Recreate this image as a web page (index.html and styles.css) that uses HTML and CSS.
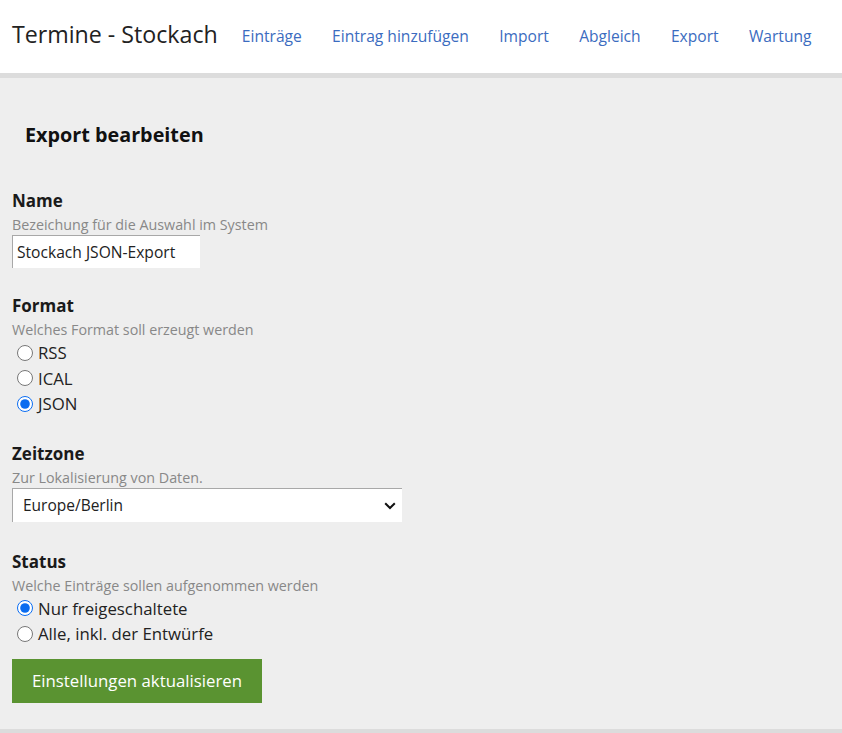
FILE: index.html
```html
<!DOCTYPE html>
<html lang="de">
<head>
<meta charset="utf-8">
<title>Termine - Stockach</title>
<link rel="stylesheet" href="styles.css">
</head>
<body>
<header class="topbar">
  <div class="brand">Termine - Stockach</div>
  <nav class="nav">
    <a href="#">Einträge</a>
    <a href="#">Eintrag hinzufügen</a>
    <a href="#">Import</a>
    <a href="#">Abgleich</a>
    <a href="#">Export</a>
    <a href="#">Wartung</a>
  </nav>
</header>
<main class="content">
  <h2 class="title">Export bearbeiten</h2>
  <form class="form">
    <div class="field">
      <div class="label">Name</div>
      <div class="help">Bezeichung für die Auswahl im System</div>
      <input class="text" type="text" value="Stockach JSON-Export">
    </div>
    <div class="field field-tight">
      <div class="label">Format</div>
      <div class="help">Welches Format soll erzeugt werden</div>
      <label class="radio"><input type="radio" name="f">RSS</label>
      <label class="radio"><input type="radio" name="f">ICAL</label>
      <label class="radio"><input type="radio" name="f" checked>JSON</label>
    </div>
    <div class="field field-loose">
      <div class="label">Zeitzone</div>
      <div class="help">Zur Lokalisierung von Daten.</div>
      <div class="select">
        <span>Europe/Berlin</span>
        <svg width="12" height="8" viewBox="0 0 12 8"><path d="M1.2 1.2 L6 6 L10.8 1.2" fill="none" stroke="#111" stroke-width="2"/></svg>
      </div>
    </div>
    <div class="field">
      <div class="label">Status</div>
      <div class="help">Welche Einträge sollen aufgenommen werden</div>
      <label class="radio"><input type="radio" name="s" checked>Nur freigeschaltete</label>
      <label class="radio"><input type="radio" name="s">Alle, inkl. der Entwürfe</label>
    </div>
    <button class="btn" type="button">Einstellungen aktualisieren</button>
  </form>
</main>
</body>
</html>
```
FILE: styles.css
```css
* { box-sizing: border-box; }
html, body { margin: 0; padding: 0; }
body {
  font-family: "Open Sans", "Liberation Sans", sans-serif;
  color: #222;
  background: #eeeeee;
  width: 842px;
  height: 733px;
  overflow: hidden;
}
.topbar {
  background: #fff;
  height: 78px;
  border-bottom: 5px solid #dcdcdc;
  display: flex;
  align-items: center;
  padding: 0 0 6px 12px;
}
.brand {
  font-size: 23.2px;
  color: #222;
  margin-right: 24px;
}
.nav { display: flex; gap: 30.3px; padding-top: 5px; }
.nav a {
  color: #3b6cc0;
  text-decoration: none;
  font-size: 15.6px;
}
.content {
  height: 655px;
  border-bottom: 4px solid #dcdcdc;
  padding: 0 12px;
}
.title {
  margin: 0;
  padding: 44px 0 0 13px;
  font-size: 19.8px;
  font-weight: 700;
  line-height: 26px;
  color: #111;
}
.form { margin-top: 42px; }
.field { margin-bottom: 27px; }
.field-tight { margin-bottom: 26px; }
.field-loose { margin-bottom: 29px; }
.label {
  font-size: 17px;
  font-weight: 700;
  line-height: 22px;
  color: #1a1a1a;
}
.help {
  font-size: 14.3px;
  color: #888;
  line-height: 20px;
  margin-top: 3px;
}
.text {
  display: block;
  width: 188px;
  height: 33px;
  margin: 0;
  border: none;
  border-top: 1px solid #a8a8a8;
  border-left: 1px solid #a8a8a8;
  background: #fff;
  font-family: inherit;
  font-size: 15.6px;
  color: #222;
  padding: 0 4px;
  outline: none;
}
.radio {
  display: flex;
  align-items: center;
  font-size: 16.8px;
  line-height: 25.5px;
  color: #222;
}
.radio input {
  margin: 0 5px 0 5px;
  width: 16px;
  height: 16px;
  accent-color: #0a6cf0;
}
.select {
  margin-top: 0;
  width: 390px;
  height: 34px;
  background: #fff;
  border-top: 1px solid #a8a8a8;
  border-left: 1px solid #a8a8a8;
  display: flex;
  align-items: center;
  justify-content: space-between;
  padding: 0 6px 0 10px;
  font-size: 15.5px;
  color: #222;
}
.select svg { margin-top: 2px; }
.btn {
  display: block;
  margin-top: -15px;
  width: 250px;
  height: 44px;
  background: #5a9331;
  color: #fff;
  border: none;
  font-family: inherit;
  font-size: 16.8px;
  padding: 0;
}
```
